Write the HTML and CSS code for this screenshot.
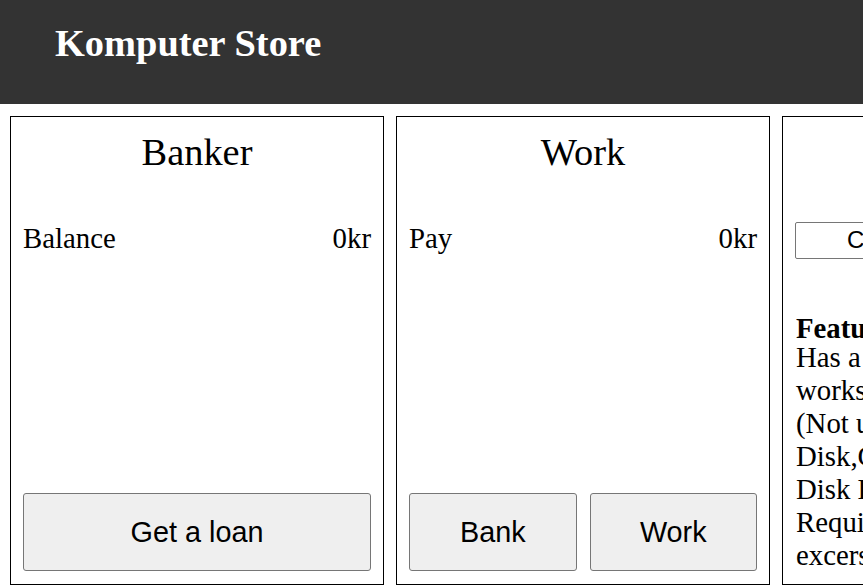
FILE: index.html
```html
<!DOCTYPE html>
<html lang="en">
<head>
<meta charset="utf-8">
<title>Komputer Store</title>
<link rel="stylesheet" href="styles.css">
</head>
<body>
<header class="topbar">
  <h1 class="brand">Komputer Store</h1>
</header>
<main class="panels">
  <section class="card">
    <h2 class="card-title">Banker</h2>
    <div class="row"><span>Balance</span><span>0kr</span></div>
    <div class="actions">
      <button class="btn">Get a loan</button>
    </div>
  </section>
  <section class="card">
    <h2 class="card-title">Work</h2>
    <div class="row"><span>Pay</span><span>0kr</span></div>
    <div class="actions">
      <button class="btn">Bank</button>
      <button class="btn">Work</button>
    </div>
  </section>
  <section class="card">
    <h2 class="card-title">Laptops</h2>
    <select class="picker">
      <option>Classic Notebook</option>
    </select>
    <div class="features">
      <div class="features-title">Features</div>
      <p class="features-text">Has a screen that<br>works, keyboard works<br>(Not using arrows),<br>Disk,CD and Floppy<br>Disk Drive.<br>Requires regular<br>excersise.</p>
    </div>
  </section>
</main>
</body>
</html>
```

FILE: styles.css
```css
html, body {
  margin: 0;
  padding: 0;
  overflow: hidden;
}

body {
  font-family: "Liberation Serif", "Times New Roman", serif;
  font-size: 28.8px;
  color: #000;
  background: #fff;
}

.topbar {
  background: #333333;
  height: 104px;
  box-sizing: border-box;
  padding: 21px 55px 0;
}

.brand {
  margin: 0;
  color: #fff;
  font-size: 38.4px;
  font-weight: bold;
  line-height: normal;
}

.panels {
  display: flex;
  gap: 12px;
  padding: 12px 10px;
  width: max-content;
}

.card {
  flex: 0 0 374px;
  box-sizing: border-box;
  border: 1px solid #000;
  padding: 12px;
  display: flex;
  flex-direction: column;
}

.card-title {
  margin: 1px 0 48px;
  font-size: 38.4px;
  font-weight: normal;
  text-align: center;
  line-height: normal;
}

.row {
  display: flex;
  justify-content: space-between;
  line-height: normal;
}

.actions {
  margin-top: auto;
  margin-bottom: 1px;
  display: flex;
  gap: 13px;
}

.btn {
  flex: 1;
  font-family: "Liberation Sans", Arial, sans-serif;
  font-size: 28.8px;
  line-height: normal;
  color: #000;
  background: #efefef;
  border: 1px solid #767676;
  border-radius: 3px;
  padding: 21.5px 8px;
}

.picker {
  width: 100%;
  height: 37px;
  box-sizing: border-box;
  font-family: "Liberation Sans", Arial, sans-serif;
  font-size: 24px;
  color: #000;
  background: #fff;
  border: 1px solid #767676;
  border-radius: 2px;
  padding: 0 0 2px 47px;
}

.features {
  margin-top: 53px;
  padding-left: 1px;
}

.features-title {
  font-weight: bold;
  line-height: normal;
  margin-bottom: -4px;
}

.features-text {
  margin: 0;
  line-height: normal;
}
```
